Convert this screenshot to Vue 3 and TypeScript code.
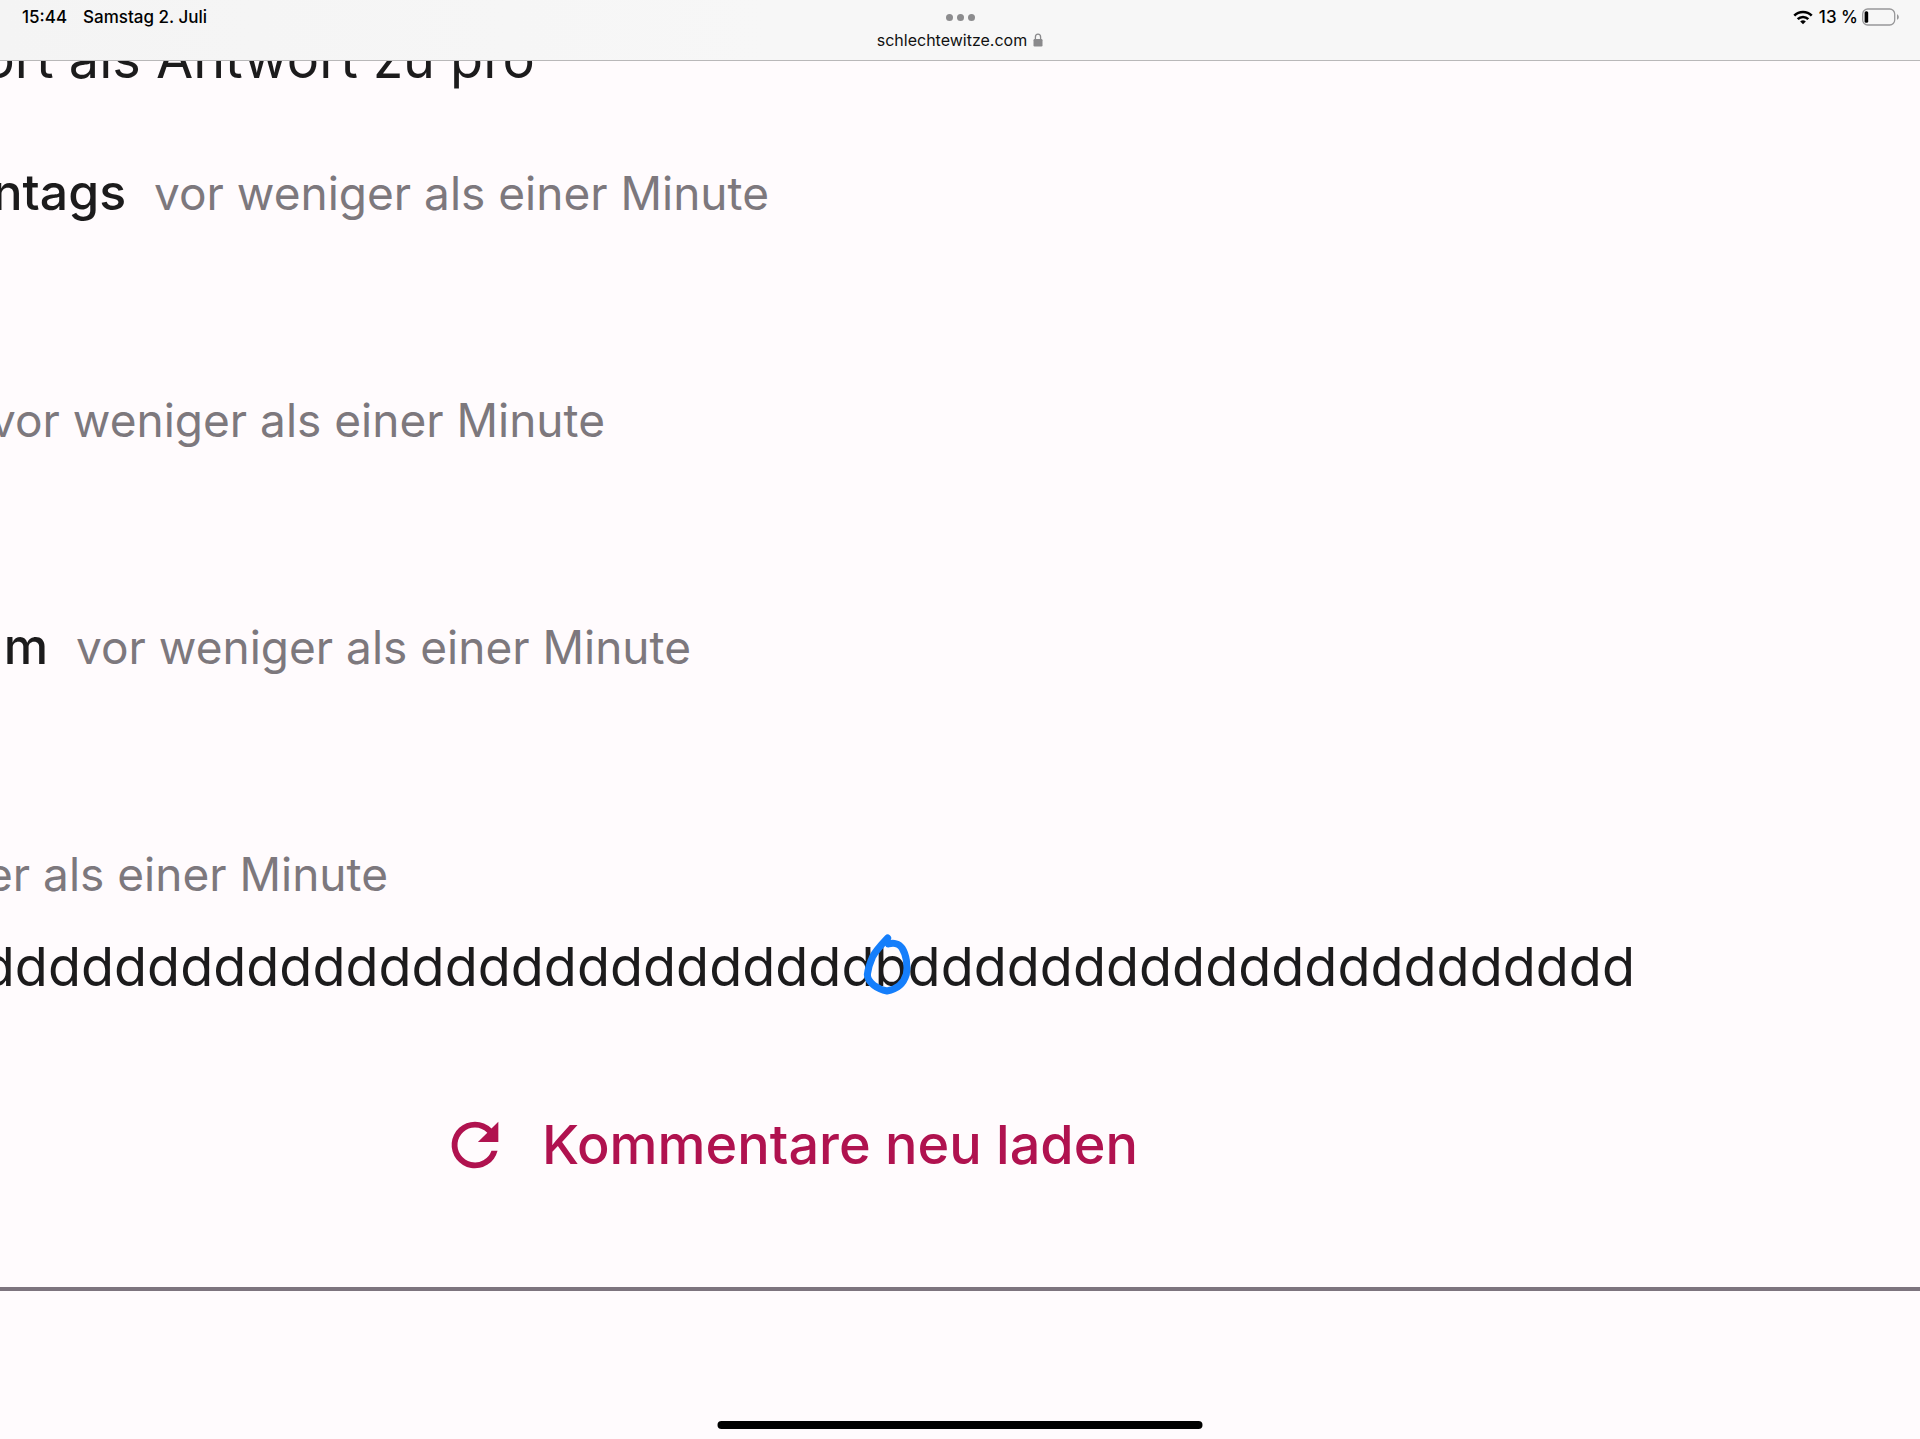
<script setup lang="ts">
interface Comment {
  id: number
  metaEnd: number
  bodyEnd?: number
  author?: string
  time?: string
  body?: string
}

const comments: Comment[] = [
  { id: 1, metaEnd: 0, bodyEnd: 535, body: 'ort als Antwort zu pro' },
  { id: 2, metaEnd: 769, author: 'ntags', time: 'vor weniger als einer Minute' },
  { id: 3, metaEnd: 605, time: 'vor weniger als einer Minute' },
  { id: 4, metaEnd: 691, author: 'm', time: 'vor weniger als einer Minute' },
]
const before = 'd'.repeat(27)
const after = 'd'.repeat(22)
</script>

<template>
  <div class="screen">
    <header class="bar">
      <div class="side">
        <time>15:44</time>
        <span>Samstag 2. Juli</span>
      </div>
      <div class="center">
        <button class="dots" type="button" aria-label="Multitasking"><i></i><i></i><i></i></button>
        <a class="url" href="#">
          schlechtewitze.com
          <svg width="10" height="14" viewBox="0 0 10 14" aria-hidden="true">
            <path d="M2.4 7V4a2.6 2.9 0 0 1 5.2 0v3" fill="none" stroke="#8a8a8c" stroke-width="1.3" />
            <rect x="0.5" y="6" width="9" height="7.4" rx="1.2" fill="#8a8a8c" />
          </svg>
        </a>
      </div>
      <div class="side status">
        <svg width="20" height="15" viewBox="0 0 20 15" aria-hidden="true">
          <g fill="none" stroke="#000" stroke-width="2.6">
            <path d="M1.3 5.6a12.4 12.4 0 0 1 17.4 0" />
            <path d="M4.7 9.1a7.6 7.6 0 0 1 10.6 0" />
          </g>
          <path d="M10 14.3l-2.8-2.8a4 4 0 0 1 5.6 0z" />
        </svg>
        <span>13 %</span>
        <svg class="battery" width="38" height="18" viewBox="0 0 38 18" aria-hidden="true">
          <rect x="0.7" y="1" width="32" height="16" rx="5" fill="none" stroke="#98989a" stroke-width="1.3" />
          <rect x="2.6" y="3.2" width="3.6" height="11.6" rx="1.5" />
          <path d="M35 6.2c2.4 1 2.4 4.6 0 5.6z" fill="#98989a" />
        </svg>
      </div>
    </header>

    <main>
      <article v-for="c in comments" :key="c.id" class="comment">
        <div v-if="c.time" class="meta" :style="{ width: c.metaEnd + 'px' }">
          <strong v-if="c.author">{{ c.author }}</strong>
          <time>{{ c.time }}</time>
        </div>
        <p class="body" :style="{ width: (c.bodyEnd ?? 0) + 'px' }">{{ c.body }}</p>
      </article>
      <article class="comment">
        <div class="meta" :style="{ width: '388px' }"><time>er als einer Minute</time></div>
        <p class="body" :style="{ width: '1635px' }">
          <span>{{ before }}<span class="odd">b<svg width="50" height="64" viewBox="130 38 150 192" aria-hidden="true">
            <path d="M204 56C186 75 168 94 159 112C150 132 145 150 143 166C144 190 174 210 202 215C232 210 252 193 260 165C265 140 260 106 247 86C238 73 222 69 206 74" />
          </svg></span>{{ after }}</span>
        </p>
      </article>

      <button class="reload" type="button">
        <svg width="70" height="70" viewBox="0 0 24 24" aria-hidden="true">
          <path d="M17.65 6.35A7.96 7.96 0 0 0 12 4a8 8 0 1 0 7.73 10h-2.08A6 6 0 1 1 12 6c1.66 0 3.14.69 4.22 1.78L13 11h7V4z" />
        </svg>
        <span>Kommentare neu laden</span>
      </button>
      <hr />
    </main>
    <div class="home"></div>
  </div>
</template>

<style>
body {
  margin: 0;
  background: #fffbfd;
}
</style>

<style scoped>
.screen {
  position: relative;
  min-height: 100vh;
  overflow: hidden;
  background: #fffbfd;
  color: #1c1b1c;
  font-family: Inter, "Liberation Sans", sans-serif;
}
.bar {
  position: relative;
  z-index: 1;
  display: flex;
  justify-content: space-between;
  box-sizing: border-box;
  height: 61px;
  padding: 6px 20px 0;
  border-bottom: 1px solid #b9b8b9;
  background: linear-gradient(90deg, #f4f4f4, #f7f7f7 40%, #f7f7f7);
  color: #000;
  font-size: 17px;
  font-weight: 500;
  line-height: 22px;
}
.side {
  display: flex;
  flex: 1;
  gap: 16px;
  height: 22px;
  padding-left: 2px;
}
.status {
  align-items: center;
  justify-content: flex-end;
  gap: 6px;
}
.battery {
  margin-left: -2px;
}
.center {
  display: flex;
  flex-direction: column;
  align-items: center;
  gap: 3px;
}
.dots {
  display: flex;
  align-items: center;
  gap: 4px;
  height: 22px;
  padding: 0;
  border: 0;
  background: none;
}
.dots i {
  width: 7px;
  height: 7px;
  border-radius: 50%;
  background: #8c8c8e;
}
.url {
  display: flex;
  align-items: center;
  gap: 6px;
  height: 18px;
  color: #111;
  font-size: 16px;
  font-weight: 400;
  line-height: 18px;
  text-decoration: none;
}
main {
  margin-top: -42px;
}
.comment {
  margin-bottom: 61px;
}
.meta {
  display: flex;
  align-items: baseline;
  justify-content: flex-end;
  gap: 28px;
  height: 64px;
  margin-bottom: 22px;
  font-size: 50px;
  line-height: 64px;
  white-space: nowrap;
}
/* keeps the baseline the same on lines without an author */
.meta::before {
  content: "\200b";
}
.meta strong {
  font-weight: 500;
}
.meta time {
  color: #7d787d;
  font-size: 46px;
}
.body {
  display: flex;
  justify-content: flex-end;
  height: 80px;
  margin: 0;
  font-size: 54px;
  line-height: 80px;
  white-space: nowrap;
}
.odd {
  position: relative;
}
.odd svg {
  position: absolute;
  top: -2px;
  left: -12px;
  overflow: visible;
}
.odd path {
  fill: none;
  stroke: #157efb;
  stroke-width: 21;
  stroke-linecap: round;
  stroke-linejoin: round;
}
.reload {
  display: flex;
  align-items: center;
  gap: 32px;
  height: 72px;
  margin: 102px 0 106px 440px;
  padding: 0;
  border: 0;
  background: none;
  color: #b0124f;
  font-family: inherit;
  font-size: 54px;
  font-weight: 500;
  line-height: 72px;
}
.reload svg {
  fill: currentColor;
}
hr {
  height: 4px;
  margin: 0;
  border: 0;
  background: #7d747e;
}
.home {
  position: absolute;
  bottom: 10px;
  left: 50%;
  width: 485px;
  height: 8px;
  border-radius: 4px;
  background: #000;
  transform: translateX(-50%);
}
</style>
